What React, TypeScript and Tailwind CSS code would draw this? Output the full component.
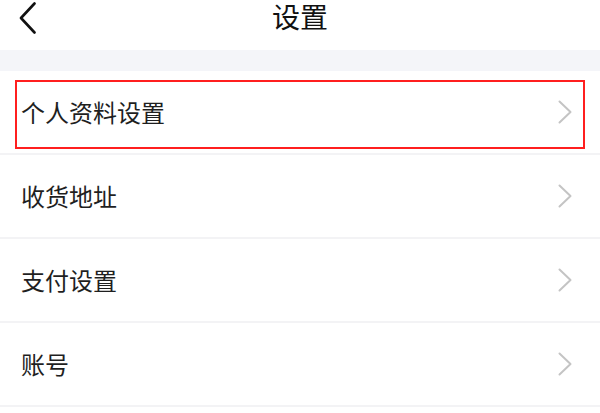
const items = ["个人资料设置", "收货地址", "支付设置", "账号"];

function Chevron({ className }: { className?: string }) {
  return (
    <svg viewBox="0 0 14 24" className={className} fill="none">
      <path d="M1.5 1.5 L12.5 12 L1.5 22.5" stroke="currentColor" strokeWidth="2" strokeLinecap="round" strokeLinejoin="round" />
    </svg>
  );
}

export default function App() {
  return (
    <div
      className="w-[600px] h-[413px] overflow-hidden bg-white"
      style={{ fontFamily: '"Noto Sans CJK SC", "Noto Sans", sans-serif' }}
    >
      <header className="relative h-[50px] flex justify-center">
        <button className="absolute left-[19px] top-[2px] text-[#111]">
          <svg viewBox="0 0 18 32" className="w-[18px] h-[32px]" fill="none">
            <path d="M15.5 1.5 L2 16 L15.5 30.5" stroke="currentColor" strokeWidth="2.6" strokeLinecap="round" strokeLinejoin="round" />
          </svg>
        </button>
        <h1 className="text-[28px] leading-[40px] -mt-[4px] text-[#111]">设置</h1>
      </header>
      <div className="h-[21px] bg-[#f4f5f9]" />
      <ul>
        {items.map((label, i) => (
          <li
            key={label}
            className="relative h-[84px] flex items-center justify-between pl-[21px] pr-[28px] border-b-2 border-[#f3f3f5]"
          >
            <span className="text-[24px] text-[#1f1f1f]">{label}</span>
            <Chevron className="w-[14px] h-[24px] text-[#c4c4c4]" />
            {i === 0 && (
              <div className="absolute left-[15px] right-[15px] top-[9px] bottom-[4px] border-2 border-[#ff1f1f]" />
            )}
          </li>
        ))}
      </ul>
    </div>
  );
}
